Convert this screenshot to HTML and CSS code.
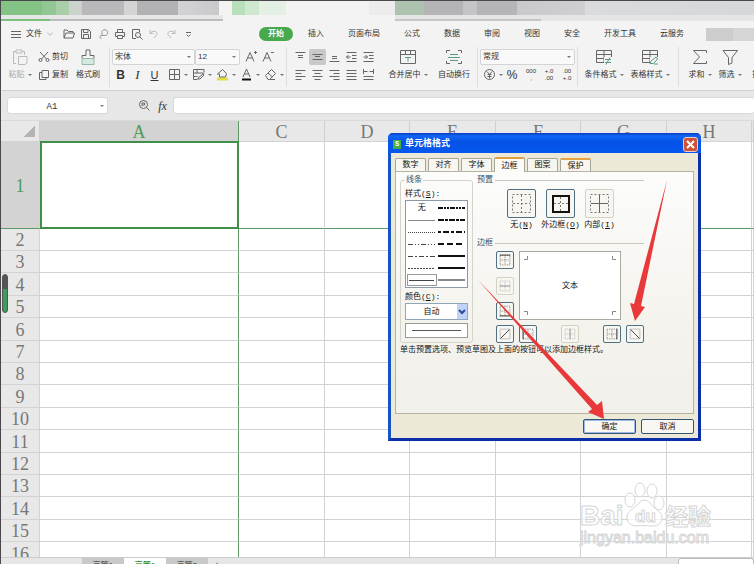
FILE: index.html
```html
<!DOCTYPE html>
<html lang="zh-CN">
  <head>
    <meta charset="UTF-8" />
    <meta name="viewport" content="width=device-width, initial-scale=1.0" />
    <title>单元格格式</title>
    <link rel="stylesheet" href="styles.css">
  </head>

  <body>
    <!-- shared icon shapes -->
    <svg class="defs" aria-hidden="true">
      <symbol id="dots" viewBox="0 0 18 18">
        <path d="M3.5 3.5h11v11h-11zM9 4v10M4 9h10" fill="none" stroke="#777" stroke-dasharray="1 1" />
      </symbol>
      <symbol id="table" viewBox="0 0 18 18">
        <path d="M1.5 2.5h15v12h-15zM1.5 6.500h15M1.500 10.500h15M9 2.500v12" />
      </symbol>
    </svg>

    <div class="titlebar"></div>

    <nav class="menu">
      <button class="file"><svg width="10" height="8"><path d="M0 1.500h10M0 4.500h10M0 7.500h10" /></svg>文件<svg width="6" height="6"><path class="light" d="M.5 1.500l2.500 3 2.500-3" /></svg></button>
      <button class="ico" aria-label="打开"><svg width="12" height="12"><path d="M1 10V2h3l1.500 1.500H10V5M1 10l2-5h8.500L10 10z" /></svg></button>
      <button class="ico" aria-label="保存"><svg width="12" height="12"><path d="M1.500 1.500h7l2 2v7h-9zM3.500 1.500v3h4.500v-3M3.500 10.500v-4h5v4" /></svg></button>
      <button class="ico" aria-label="输出"><svg width="12" height="12"><path class="light2" d="M5 7.500V3.500a3 3 0 1 1 2 4H4.500a1.500 1.500 0 1 0 0 3" /></svg></button>
      <button class="ico" aria-label="打印"><svg width="12" height="12"><path d="M3.500 4V1.500h5V4M3 8.500H1.500V4.500h9v4H9M3.500 7.500h5v3h-5z" /></svg></button>
      <button class="ico" aria-label="打印预览"><svg width="12" height="12"><path d="M5 10.500H1.500v-9h7V4M9 9l2.500 2.500" /><circle cx="7" cy="7" r="2.500" /></svg></button>
      <button class="ico" aria-label="撤销"><svg width="12" height="12"><path class="light" d="M2 2v3.500h3.500M2 5.500c3-4 8-2 7 1L6 10" /></svg></button>
      <button class="ico" aria-label="恢复"><svg width="12" height="12"><path class="light" d="M10 2v3.500H6.500M10 5.500c-3-4-8-2-7 1L6 10" /></svg></button>
      <button class="ico" aria-label="更多"><svg width="12" height="12"><path d="M4 4.500h5M4.500 6.500l2 2 2-2" /></svg></button>
      <div class="tabs">
        <a href="#" class="active">开始</a>
        <a href="#">插入</a>
        <a href="#">页面布局</a>
        <a href="#">公式</a>
        <a href="#">数据</a>
        <a href="#">审阅</a>
        <a href="#">视图</a>
        <a href="#">安全</a>
        <a href="#">开发工具</a>
        <a href="#">云服务</a>
      </div>
      <div class="account"></div>
    </nav>

    <div class="ribbon">
      <div class="group clipboard">
        <button class="big off"><svg width="18" height="18"><path d="M5 15.500H2.500v-12H5M11 3.500h2.500V7M5 2h6v3H5zM7.500 8.500h8.500v6.500l-2 1.500H7.500z" /></svg><span>粘贴<i class="arr"></i></span></button>
        <div class="stack">
          <button class="line"><svg width="12" height="12"><path d="M2 1l6.500 7M10 1L3.500 8" /><circle cx="2.500" cy="9" r="1.500" /><circle cx="9.500" cy="9" r="1.500" /></svg>剪切</button>
          <button class="line"><svg width="12" height="12"><path d="M4 1.500h6.500v7H4zM4 3.500H1.500v7H8v-2" /></svg>复制</button>
        </div>
        <button class="big brush"><svg width="18" height="18"><path class="tint" d="M3 10.500h12v6H3z" /><path d="M3 10V7.500h4V2h4v5.500h4V10" /></svg><span>格式刷</span></button>
      </div>

      <div class="group fonts">
        <div class="row">
          <span class="pick fontname"><select aria-label="字体"><option>宋体</option></select></span>
          <span class="pick fontsize"><select aria-label="字号"><option>12</option></select></span>
          <button class="ico" aria-label="增大字号"><svg width="14" height="13"><path d="M2 11.500l4-9 4 9M3.500 8h5M10 2.500h3M11.500 1v3" /></svg></button>
          <button class="ico" aria-label="减小字号"><svg width="14" height="13"><path d="M2 11.500l4-9 4 9M3.500 8h5M10 2.500h3" /></svg></button>
        </div>
        <div class="row">
          <button class="ico bold">B</button>
          <button class="ico italic">I</button>
          <button class="ico under">U</button>
          <button class="drop" aria-label="边框"><svg width="13" height="13"><path d="M1.500 1.500h10v10h-10zM6.500 1.500v10M1.500 6.500h10" /></svg><i class="arr"></i></button>
          <button class="drop" aria-label="单元格样式"><svg width="13" height="13"><path d="M12 4V1.500H1.500v10h4M1.500 5h11M1.500 8.500h4M5 1.500v4M6 10l5-4 1 1-4 4H6z" /></svg><i class="arr"></i></button>
          <button class="drop" aria-label="填充颜色"><svg width="13" height="13"><path class="yellow" d="M1 9.500h11v3H1z" /><path d="M1.500 6L6.500 1.500l4 4L9.500 9H3.500V6z" /></svg><i class="arr"></i></button>
          <button class="drop" aria-label="字体颜色"><svg width="13" height="13"><path d="M3 9l3.500-8L10 9M4.500 6h4" /><path class="black" d="M2 10.500h9v2H2z" /></svg><i class="arr"></i></button>
          <button class="drop" aria-label="清除"><svg width="13" height="13"><path d="M1.500 7.500l6-6 4 4-6 6H4zM4 5l4.500 4M6 11.500h5" /></svg><i class="arr"></i></button>
        </div>
      </div>

      <div class="group align">
        <div class="row">
          <button class="ico" aria-label="顶端对齐"><svg width="11" height="11"><path d="M.5 1.500h10M3 4.500h5M3 6.500h5" /></svg></button>
          <button class="ico on" aria-label="垂直居中"><svg width="11" height="11"><path d="M.5 3.500h10M3 5.500h5M.5 8.500h10" /></svg></button>
          <button class="ico" aria-label="底端对齐"><svg width="11" height="11"><path d="M3 5.500h5M3 7.500h5M.5 10.500h10" /></svg></button>
          <button class="ico" aria-label="减少缩进"><svg width="11" height="11"><path d="M.5 1.500h10M6 4.500h4.500M6 7.500h4.500M.5 10.500h10M4.500 6h-4l2-2M.5 6l2 2" /></svg></button>
          <button class="ico" aria-label="增加缩进"><svg width="11" height="11"><path d="M.5 1.500h10M6 4.500h4.500M6 7.500h4.500M.5 10.500h10M.5 6h4l-2-2M4.500 6l-2 2" /></svg></button>
        </div>
        <div class="row">
          <button class="ico" aria-label="左对齐"><svg width="11" height="11"><path d="M.5 1.500h10M.5 4.500h6M.5 7.500h10M.5 10.500h6" /></svg></button>
          <button class="ico" aria-label="居中"><svg width="11" height="11"><path d="M.5 1.500h10M2.500 4.500h6M.5 7.500h10M2.500 10.500h6" /></svg></button>
          <button class="ico" aria-label="右对齐"><svg width="11" height="11"><path d="M.5 1.500h10M4.500 4.500h6M.5 7.500h10M4.500 10.500h6" /></svg></button>
          <button class="ico" aria-label="两端对齐"><svg width="11" height="11"><path d="M.5 1.500h10M.5 4.500h10M.5 7.500h10M.5 10.500h10" /></svg></button>
          <button class="ico" aria-label="分散对齐"><svg width="11" height="11"><path d="M.5 0v5M10.500 0v5M1 2.500h3.500M6.500 2.500H10M.5 7.500h10M.5 10.500h10" /></svg></button>
        </div>
      </div>

      <div class="group merge">
        <button class="big"><svg width="18" height="18"><path d="M1.500 2.500h15v13h-15zM1.500 6.500h15M6.500 2.500v4M11.500 2.500v4" /><path class="green" d="M6 9.500h6M9 9.500v4" /></svg><span>合并居中<i class="arr"></i></span></button>
        <button class="big"><svg width="18" height="18"><path d="M1.500 5V2.500H5M13 2.500h3.500V5M1.500 13v2.500H5M13 15.500h3.500V13" /><path class="green" d="M5 6.500h8M3 9.500h12M5 12.500h8" /></svg><span>自动换行</span></button>
      </div>

      <div class="group number">
        <div class="row">
          <span class="pick numfmt"><select aria-label="数字格式"><option>常规</option></select></span>
        </div>
        <div class="row">
          <button class="drop" aria-label="货币"><svg width="13" height="13"><circle cx="6.500" cy="6.500" r="5" /><path d="M4 3.500l2.500 3 2.500-3M6.500 6.500v4M4.500 6.500h4M4.500 8.500h4" /></svg><i class="arr"></i></button>
          <button class="ico percent">%</button>
          <button class="ico tiny">000<br>,</button>
          <button class="ico tiny">+.0<br>.00</button>
          <button class="ico tiny">.00<br>+.0</button>
        </div>
      </div>

      <div class="group styles">
        <button class="big"><svg width="18" height="18"><use href="#table" /><path class="patch" d="M9 9h9v9H9z" /><path class="green" d="M10 11.500h6M10 14.500h6M15 9.500l-4 7" /></svg><span>条件格式<i class="arr"></i></span></button>
        <button class="big"><svg width="18" height="18"><use href="#table" /><path class="patch" d="M9 9h9v9H9z" /><path class="green" d="M9 16l1-3 5-4 1.500 2-4 4.500H9M13 16h4" /></svg><span>表格样式<i class="arr"></i></span></button>
      </div>

      <div class="group edit">
        <button class="big"><svg width="18" height="18"><path d="M15.500 5V2.500h-13l6 6.500-6 6.500h13V13" /></svg><span>求和<i class="arr"></i></span></button>
        <button class="big"><svg width="18" height="18"><path d="M2 2.500h14.500L11 9.500V15l-3.500 1.500v-7z" /></svg><span>筛选<i class="arr"></i></span></button>
        <button class="big"><svg width="18" height="18"><path d="M4.500 2.500h9v13h-9z" /></svg><span>排序</span></button>
      </div>
    </div>

    <div class="formula">
      <span class="pick namebox"><input type="text" value="A1" aria-label="名称框"></span>
      <button class="ico" aria-label="查找"><svg width="13" height="13"><circle cx="5.500" cy="5.500" r="4" /><path d="M4 7V4h2.500v2H4.500M8.500 8.500l3 3" /></svg></button>
      <button class="ico fx">fx</button>
      <input type="text" class="fxinput" aria-label="编辑栏">
    </div>

    <main class="sheet">
      <table>
        <colgroup>
          <col class="c-head"><col class="c-a"><col class="c-odd"><col class="c-even"><col class="c-odd"><col class="c-even"><col class="c-odd"><col class="c-even"><col>
        </colgroup>
        <thead>
          <tr><th class="corner"></th><th class="sel">A</th><th>C</th><th>D</th><th>E</th><th>F</th><th>G</th><th>H</th><th></th></tr>
        </thead>
        <tbody>
          <tr class="first"><th>1</th><td class="cell"></td><td></td><td></td><td></td><td></td><td></td><td></td><td></td></tr>
          <tr><th>2</th><td></td><td></td><td></td><td></td><td></td><td></td><td></td><td></td></tr>
          <tr><th>3</th><td></td><td></td><td></td><td></td><td></td><td></td><td></td><td></td></tr>
          <tr><th>4</th><td></td><td></td><td></td><td></td><td></td><td></td><td></td><td></td></tr>
          <tr><th>5</th><td></td><td></td><td></td><td></td><td></td><td></td><td></td><td></td></tr>
          <tr><th>6</th><td></td><td></td><td></td><td></td><td></td><td></td><td></td><td></td></tr>
          <tr><th>7</th><td></td><td></td><td></td><td></td><td></td><td></td><td></td><td></td></tr>
          <tr><th>8</th><td></td><td></td><td></td><td></td><td></td><td></td><td></td><td></td></tr>
          <tr><th>9</th><td></td><td></td><td></td><td></td><td></td><td></td><td></td><td></td></tr>
          <tr><th>10</th><td></td><td></td><td></td><td></td><td></td><td></td><td></td><td></td></tr>
          <tr><th>11</th><td></td><td></td><td></td><td></td><td></td><td></td><td></td><td></td></tr>
          <tr><th>12</th><td></td><td></td><td></td><td></td><td></td><td></td><td></td><td></td></tr>
          <tr><th>13</th><td></td><td></td><td></td><td></td><td></td><td></td><td></td><td></td></tr>
          <tr><th>14</th><td></td><td></td><td></td><td></td><td></td><td></td><td></td><td></td></tr>
          <tr><th>15</th><td></td><td></td><td></td><td></td><td></td><td></td><td></td><td></td></tr>
          <tr><th>16</th><td></td><td></td><td></td><td></td><td></td><td></td><td></td><td></td></tr>
        </tbody>
      </table>
    </main>

    <footer class="sheets">
      <button>高管1</button>
      <button class="current">高管2</button>
      <button>高管3</button>
      <button class="add">+</button>
      <div class="scroll"></div>
    </footer>

    <div class="handle"></div>

    <!-- watermark -->
    <svg class="mark" width="150" height="70">
      <g class="outline">
        <text x="4" y="44" class="latin">Bai</text>
        <ellipse cx="54" cy="19" rx="5" ry="7" />
        <ellipse cx="64" cy="9" rx="5" ry="7" />
        <ellipse cx="76" cy="10" rx="5" ry="7" />
        <ellipse cx="83" cy="22" rx="5" ry="7" />
        <path d="M51 36c0-6 7-8 12-14 3-4 8-4 11 0 4 6 12 8 12 15 0 5-4 8-9 8-5 0-11-1-16 0-6 0-10-3-10-9z" />
        <text x="59" y="41" class="du">du</text>
        <text x="89" y="44" class="cjk">经验</text>
        <text x="4" y="62" class="url">jingyan.baidu.com</text>
      </g>
    </svg>

    <div class="dialog" role="dialog" aria-labelledby="dlg-title">
      <div class="dlg-title">
        <span class="logo">S</span>
        <span id="dlg-title">单元格格式</span>
        <button class="close" aria-label="关闭"><svg width="9" height="9"><path d="M1 1l7 7M8 1L1 8" /></svg></button>
      </div>

      <div class="dlg-body">
        <div class="dlg-tabs">
          <button>数字</button>
          <button>对齐</button>
          <button>字体</button>
          <button class="current">边框</button>
          <button>图案</button>
          <button class="hot">保护</button>
        </div>

        <div class="panel">
          <div class="cols">
            <fieldset>
              <legend>线条</legend>
              <div class="lbl">样式(<u>S</u>):</div>
              <div class="styles-list">
                <span>无</span>
                <svg><path class="w2" d="M1 6h27" stroke-dasharray="5 1 2 1 2 1" /></svg>
                <svg><path d="M1 6.500h27" class="gray" /></svg>
                <svg><path class="w2" d="M1 6h27" stroke-dasharray="6 1 3 1" /></svg>
                <svg><path d="M1 6.500h27" stroke-dasharray="1 1" /></svg>
                <svg><path class="w2" d="M1 6h27" stroke-dasharray="3 2 6 2" /></svg>
                <svg><path d="M1 6.500h27" stroke-dasharray="5 2 1 2 1 2" /></svg>
                <svg><path class="w2" d="M1 6h27" stroke-dasharray="6 3" /></svg>
                <svg><path d="M1 6.500h27" stroke-dasharray="5 2 2 2" /></svg>
                <svg><path class="w2" d="M1 6h27" /></svg>
                <svg><path d="M1 6.500h27" stroke-dasharray="2 1" /></svg>
                <svg><path class="w2" d="M1 6h27" /></svg>
                <svg class="picked"><path d="M1 5.500h25" /></svg>
                <svg><path class="w2 gray" d="M1 6h27" /></svg>
              </div>
              <label class="lbl" for="color">颜色(<u>C</u>):</label>
              <span class="combo"><select id="color"><option>自动</option></select><svg width="9" height="15"><path d="M2 6l3 3 3-3" /></svg></span>
              <div class="sample"></div>
            </fieldset>

            <div class="right">
              <h3>预置</h3>
              <div class="presets">
                <div><button id="p-none"><svg width="25" height="25"><path class="grid" d="M3.500 3.500h18v18h-18zM12.500 4v17M4 12.500h17" /></svg></button><label for="p-none">无(<u>N</u>)</label></div>
                <div><button id="p-out"><svg width="25" height="25"><path class="grid" d="M12.500 6v14M6 12.500h14" /><path class="thick" d="M5 5h16v16H5z" /></svg></button><label for="p-out">外边框(<u>O</u>)</label></div>
                <div><button id="p-in" class="dim"><svg width="25" height="25"><path class="grid" d="M3.500 3.500h18v18h-18z" /><path d="M12.500 4v17M4 12.500h17" /></svg></button><label for="p-in">内部(<u>I</u>)</label></div>
              </div>
              <h3>边框</h3>
              <div class="edges">
                <div class="side">
                  <button aria-label="上边框"><svg viewBox="0 0 18 18"><use href="#dots" /><path d="M3 3.500h12" /></svg></button>
                  <button aria-label="内横线" class="dim"><svg viewBox="0 0 18 18"><use href="#dots" /><path d="M3 9h12" /></svg></button>
                  <button aria-label="下边框"><svg viewBox="0 0 18 18"><use href="#dots" /><path d="M3 14.500h12" /></svg></button>
                </div>
                <div class="preview">
                  <svg width="5" height="5"><path d="M0 3.500h3.500V0" /></svg>
                  <svg width="5" height="5"><path d="M5 3.500H1.500V0" /></svg>
                  <span>文本</span>
                  <svg width="5" height="5"><path d="M0 1.500h3.500V5" /></svg>
                  <svg width="5" height="5"><path d="M5 1.500H1.500V5" /></svg>
                </div>
                <button aria-label="斜线" class="diag"><svg viewBox="0 0 18 18"><path class="frame" d="M3.500 3.500h11v11h-11z" /><path d="M4 14L14 4" /></svg></button>
                <div class="bottom">
                  <button aria-label="左边框"><svg viewBox="0 0 18 18"><use href="#dots" /><path d="M3.500 3v12" /></svg></button>
                  <button aria-label="内竖线" class="dim"><svg viewBox="0 0 18 18"><use href="#dots" /><path d="M9 3v12" /></svg></button>
                  <button aria-label="右边框"><svg viewBox="0 0 18 18"><use href="#dots" /><path d="M14.500 3v12" /></svg></button>
                </div>
                <button aria-label="反斜线" class="diag"><svg viewBox="0 0 18 18"><path class="frame" d="M3.500 3.500h11v11h-11z" /><path d="M4 4l10 10" /></svg></button>
              </div>
            </div>
          </div>
          <p>单击预置选项、预览草图及上面的按钮可以添加边框样式。</p>
        </div>

        <div class="actions">
          <button class="ok">确定</button>
          <button>取消</button>
        </div>
      </div>

      <svg class="pointers" viewBox="0 0 313 307">
        <path d="M90 146L209 271 214 267 216 285 200 278 204 275z" />
        <path d="M279 46L253 172 257 173 247 187 242 169 246 170z" />
      </svg>
    </div>
  </body>
</html>
```
FILE: styles.css
```css
* {
  box-sizing: border-box;
}
body {
  margin: 0;
  height: 100vh;
  display: flex;
  flex-direction: column;
  overflow: hidden;
  position: relative;
  border-left: 1px solid #4a484c;
  background: #f3f3f3;
  color: #333;
  font: 8px/12px "Liberation Sans", "Noto Sans CJK SC", sans-serif;
}
button,
input,
select {
  margin: 0;
  padding: 0;
  border: 0;
  background: none;
  color: inherit;
  font: inherit;
  white-space: nowrap;
}
svg {
  fill: none;
  stroke: #666;
  flex: none;
}
.defs {
  position: absolute;
  width: 0;
  height: 0;
}

/* title strip and menu */
.titlebar {
  flex: none;
  height: 21px;
  border-top: 1px solid #4a484c;
  background:
    linear-gradient(90deg, #7cc07f 49px, #bdbdbd 49px, #bdbdbd 222px, transparent 222px, transparent 394px, #c6c6c6 394px, #c6c6c6 540px, transparent 540px) 0 18px / 100% 2px no-repeat,
    linear-gradient(90deg, #83c386 41px, #92c795 41px, #92c795 55px, #a8ceaa 55px, #a8ceaa 68px, #ccd2cc 68px, #ccd2cc 81px, #b9b9bb 81px, #b9b9bb 123px, #d4d4d5 123px, #d4d4d5 136px, #b2b2b4 136px, #b2b2b4 177px, #d3d3d5 177px, #c9c9cb 218px, #f3f3f3 218px, #f3f3f3 231px, #b9dfba 231px, #b9dfba 244px, #cee7ce 244px, #cee7ce 258px, #e4f0e4 258px, #e4f0e4 285px, #f3f3f3 285px, #f3f3f3 368px, #ececed 368px, #ececed 394px, #adc3af 394px, #adc3af 423px, #b4b4b6 423px, #b4b4b6 462px, #c5c5c7 462px, #c5c5c7 476px, #b5b5b7 476px, #b5b5b7 516px, #c9c9cb 516px, #cfcfd1 584px, #dadbdd 584px, #d6d7d9) 0 0 / 100% 14px no-repeat,
    linear-gradient(90deg, #e6e6e6 222px, #f3f3f3 222px, #f3f3f3 394px, #e5e5e5 394px);
}
.menu {
  flex: none;
  display: flex;
  align-items: center;
  height: 26px;
  padding-left: 10px;
}
.menu .light {
  stroke: #bbb;
}
.menu .light2 {
  stroke: #999;
}
.file {
  display: flex;
  align-items: center;
  gap: 5px;
  width: 49px;
}
.ico {
  flex: none;
  display: flex;
  align-items: center;
  justify-content: center;
  width: 17px;
  height: 16px;
}
.tabs {
  display: flex;
  align-items: center;
  gap: 24px;
  margin-left: 72px;
}
.tabs a {
  color: #333;
  text-decoration: none;
  white-space: nowrap;
}
.tabs .active {
  margin: 0 -9px;
  padding: 1px 9px;
  border-radius: 7px;
  background: #48a84c;
  color: #fff;
  font-weight: bold;
}
.account {
  flex: 1;
  height: 13px;
  margin-left: 22px;
  background: linear-gradient(90deg, #cdcdcd 27px, #d6d6d6 27px);
}

/* ribbon */
.ribbon {
  flex: none;
  display: flex;
  height: 44px;
  border-bottom: 1px solid #d0d0d0;
  overflow: hidden;
}
.group {
  flex: none;
  padding-top: 1px;
  margin: 0 2px 3px 0;
  border-right: 1px solid #ddd;
}
.row {
  display: flex;
  align-items: center;
  height: 17px;
  margin-bottom: 1px;
}
.clipboard,
.merge,
.styles,
.edit {
  display: flex;
}
.clipboard {
  width: 109px;
  padding-left: 4px;
}
.fonts {
  width: 175px;
}
.align {
  width: 88px;
  padding-left: 3px;
  border: 0;
}
.merge {
  width: 99px;
  padding-left: 8px;
  gap: 4px;
}
.number {
  width: 98px;
}
.styles {
  width: 99px;
  padding-left: 3px;
  gap: 4px;
}
.edit {
  border: 0;
  padding-left: 4px;
}
.big {
  flex: none;
  display: flex;
  flex-direction: column;
  align-items: center;
  justify-content: space-between;
  height: 33px;
  width: 30px;
}
.merge .big,
.styles .big {
  width: 42px;
}
.big.off {
  color: #aaa;
}
.big.off svg {
  stroke: #bbb;
}
.stack {
  width: 38px;
  padding-left: 3px;
}
.line {
  display: flex;
  align-items: center;
  gap: 2px;
  height: 17px;
  margin-bottom: 1px;
}
.arr {
  display: inline-block;
  margin-left: 3px;
  border: 2px solid transparent;
  border-top-color: #777;
  border-bottom: 0;
  vertical-align: middle;
}
.drop {
  flex: none;
  display: flex;
  align-items: center;
  width: 24px;
  padding-left: 5px;
}
.number .drop {
  width: 22px;
  padding-left: 3px;
}
.tint {
  fill: #d5e8dd;
  stroke: #9ab8a8;
}
.green {
  stroke: #5c9a84;
}
.yellow {
  fill: #e2dc3c;
  stroke: none;
}
.black {
  fill: #111;
  stroke: none;
}
.patch {
  fill: #f3f3f3;
  stroke: none;
}
.on {
  background: #c9c9c9;
  border-radius: 2px;
}
.bold {
  font-size: 12px;
  font-weight: bold;
}
.italic {
  font: italic 13px/16px "Liberation Serif", serif;
}
.under {
  font-size: 11px;
  text-decoration: underline;
}
.percent {
  width: 20px;
  font-size: 12px;
}
.tiny {
  display: block;
  font-size: 6px;
  line-height: 7px;
  width: 18px;
}
.pick {
  position: relative;
  flex: none;
  display: flex;
  height: 16px;
  border: 1px solid #d4d4d4;
  border-radius: 2px;
  background: #f9f9f9;
}
.pick::after {
  content: "";
  align-self: center;
  margin-right: 3px;
  border: 2px solid transparent;
  border-top-color: #777;
  border-bottom: 0;
}
.pick select,
.pick input {
  appearance: none;
  flex: 1;
  min-width: 0;
  padding-left: 2px;
  outline: 0;
}
.fontname {
  width: 83px;
}
.fontsize {
  width: 45px;
  margin-right: 2px;
}
.numfmt {
  width: 95px;
}

/* name box and formula input */
.formula {
  flex: none;
  display: flex;
  align-items: center;
  height: 30px;
  padding-left: 6px;
  background: #e7e7e7;
  border-bottom: 1px solid #dadada;
}
.formula .pick,
.fxinput {
  height: 17px;
  border: 1px solid #d9d9d9;
  border-radius: 3px;
  background: #fff;
}
.formula .namebox {
  width: 101px;
  margin-right: 28px;
}
.namebox input {
  padding: 2px 4px 0 0;
  text-align: center;
  font: 9px/12px "Liberation Mono", monospace;
}
.fx {
  width: 19px;
  margin-right: 1px;
  font: italic 12px/16px "Liberation Serif", serif;
}
.fxinput {
  flex: 1;
  border-right: 0;
}

/* cells */
.sheet {
  flex: 1;
  min-height: 0;
  overflow: hidden;
  background: #fff;
}
table {
  width: 100%;
  table-layout: fixed;
  border-collapse: separate;
  border-spacing: 0;
}
.c-head {
  width: 39px;
}
.c-a {
  width: 199px;
}
.c-odd {
  width: 86px;
}
.c-even {
  width: 85px;
}
th,
td {
  height: 22px;
  padding: 0;
  border-right: 1px solid #d3d3d3;
  border-bottom: 1px solid #d3d3d3;
}
/* rows run 22px, every few 23px */
tr:nth-child(5n + 4) td,
tr:nth-child(5n + 1) td {
  height: 23px;
}
th {
  padding-top: 1px;
  background: #e8e8e8;
  color: #777;
  font: 18px/18px "Liberation Serif", serif;
}
thead th {
  height: 21px;
  padding-top: 2px;
  border-right-color: #cfcfcf;
}
thead .sel {
  background: #d3d3d3;
  color: #4e9a57;
  border-bottom-color: #3f8f48;
}
.corner {
  background: linear-gradient(135deg, transparent 50%, #b4b4b4 50%) 23px 5px / 11px 11px no-repeat #e8e8e8;
}
td:nth-child(2),
.sel {
  border-right-color: #5c9a64;
}
tbody .first th {
  background: #d3d3d3;
  color: #4e9a57;
}
tbody .first th,
tbody .first td {
  height: 87px;
  border-bottom-color: #5c9a64;
}
tbody .first .cell {
  border: 2px solid #3f8f48;
  border-top-width: 1px;
}

/* sheet tabs */
.sheets {
  flex: none;
  display: flex;
  height: 7px;
  padding-left: 81px;
  overflow: hidden;
  border-top: 1px solid #ccc;
  background: #e6e6e6;
}
.sheets button {
  width: 42px;
  height: 14px;
  padding-top: 1px;
  background: #c9c9c9;
}
.sheets .current {
  background: #fff;
  color: #2f8f3a;
  font-weight: bold;
}
.sheets .add {
  width: 18px;
  background: none;
  font-size: 12px;
}
.scroll {
  width: 76px;
  height: 12px;
  margin-left: auto;
  border: 1px solid #bbb;
  border-radius: 3px;
  background: #fff;
}
.handle {
  position: absolute;
  left: 1px;
  top: 274px;
  width: 6px;
  height: 39px;
  border: 1px solid #555;
  border-radius: 3px;
  background: linear-gradient(#555 14px, #3f9a5c 14px);
}

.mark {
  position: absolute;
  left: 575px;
  top: 481px;
}
.outline {
  fill: #fff;
  fill-opacity: 0.7;
  stroke: #d6d6d6;
}
.latin {
  font: bold 28px "Liberation Sans", sans-serif;
}
.du {
  font: bold 17px "Liberation Sans", sans-serif;
}
.cjk {
  font: bold 23px "Noto Sans CJK SC", sans-serif;
}
.url {
  font: 16px "Liberation Sans", sans-serif;
}

/* dialog */
.dialog {
  position: absolute;
  left: 387px;
  top: 133px;
  width: 313px;
  border: 3px solid #0a2fa8;
  border-top: 0;
  border-left-color: #1554c4;
  border-radius: 5px 5px 0 0;
  background: #0a4fe0;
  color: #111;
  font-family: "Liberation Mono", "Noto Sans CJK SC", monospace;
}
.dlg-title {
  display: flex;
  align-items: center;
  gap: 4px;
  height: 20px;
  margin: 0 -3px;
  padding: 2px 3px 0 5px;
  border-radius: 5px 5px 0 0;
  background: linear-gradient(#0a3cc0, #0f66f5 3px, #0652e6 9px, #0558f0);
  color: #fff;
  font-size: 9px;
  font-weight: bold;
}
.logo {
  width: 8px;
  height: 9px;
  background: #3fae49;
  font-size: 7px;
  line-height: 9px;
  text-align: center;
}
.close {
  display: flex;
  align-items: center;
  justify-content: center;
  width: 15px;
  height: 15px;
  margin-left: auto;
  border: 1px solid #eecdc8;
  border-radius: 3px;
  background: #cf5238;
}
.close svg {
  stroke: #fff;
  stroke-width: 2;
}
.dlg-body {
  padding: 4px;
  background: #ece9d9;
}
.dlg-tabs {
  display: flex;
  gap: 2px;
  align-items: flex-end;
}
.dlg-tabs button {
  width: 31px;
  height: 13px;
  border: 1px solid #a5a698;
  border-bottom: 0;
  border-radius: 2px 2px 0 0;
  background: #f7f6f0;
}
.dlg-tabs .current {
  height: 15px;
  margin-bottom: -1px;
  border-top: 2px solid #e0a040;
  background: #fcfbf8;
}
.dlg-tabs .hot {
  border-top: 2px solid #e8a33c;
}
.panel {
  height: 243px;
  padding: 3px 4px;
  border: 1px solid #b4b3a4;
  background: linear-gradient(#fcfcfb, #f4f2ec 70%, #f2f0ea);
}
.cols {
  display: flex;
  gap: 4px;
}
fieldset {
  width: 73px;
  margin: 0;
  padding: 3px 4px;
  border: 1px solid #d5d4ca;
  border-radius: 3px;
}
legend,
h3 {
  margin: 0;
  color: #2e5570;
  font-size: 8px;
  font-weight: normal;
  line-height: 10px;
}
legend {
  padding: 0 1px;
}
.lbl {
  display: block;
  line-height: 12px;
}
.styles-list {
  display: grid;
  grid-template-columns: 1fr 1fr;
  grid-auto-rows: 12px;
  margin-bottom: 3px;
  padding: 1px;
  border: 1px solid #8d9aa5;
  background: #fff;
}
.styles-list span {
  text-align: center;
}
.styles-list svg {
  width: 100%;
  height: 12px;
  stroke: #444;
}
.styles-list .picked {
  border: 1px solid #999;
}
.styles-list .w2 {
  stroke: #111;
  stroke-width: 2;
}
.styles-list .gray {
  stroke: #888;
}
.combo {
  display: flex;
  height: 17px;
  border: 1px solid #8fa5b8;
  background: #fff;
}
.combo select {
  appearance: none;
  flex: 1;
  min-width: 0;
  text-align: center;
}
.combo svg {
  width: 10px;
  background: #c2d3fb;
  stroke: #2a4a94;
  stroke-width: 2;
}
.sample {
  height: 15px;
  margin-top: 3px;
  padding: 6px 4px;
  border: 1px solid #999;
  background: #555 content-box;
  box-shadow: inset 0 0 0 6px #fff;
}
.right {
  flex: 1;
}
h3 {
  display: flex;
  align-items: center;
  gap: 2px;
}
h3::after {
  content: "";
  width: 149px;
  height: 1px;
  background: #c9c8be;
}
.presets {
  display: flex;
  margin: 4px 0 7px;
  padding-left: 25px;
}
.presets div {
  display: flex;
  flex-direction: column;
  align-items: center;
  width: 39px;
}
.presets label {
  line-height: 13px;
  white-space: nowrap;
}
.presets button,
.edges button {
  display: flex;
  align-items: center;
  justify-content: center;
  border: 1px solid #4f6f82;
  border-radius: 2px;
  background: #f7f6f1;
}
.presets button {
  width: 29px;
  height: 29px;
}
.edges button {
  width: 18px;
  height: 18px;
}
.presets .dim,
.edges .dim {
  border-color: #d3d1c2;
}
.grid {
  stroke: #777;
  stroke-dasharray: 2 2;
}
.thick {
  stroke: #111;
  stroke-width: 2;
}
.edges .dim svg {
  opacity: 0.5;
}
.edges button svg {
  width: 16px;
  height: 16px;
  stroke: #333;
}
.edges .frame {
  stroke: #bbb;
}
.edges {
  display: grid;
  grid-template-columns: 18px 102px 18px;
  gap: 5px;
  margin-top: 3px;
  padding-left: 19px;
}
.side {
  display: flex;
  flex-direction: column;
  justify-content: space-between;
}
.bottom {
  display: flex;
  justify-content: space-between;
}
.preview {
  display: grid;
  grid-template-columns: 1fr 1fr;
  grid-template-rows: 1fr auto 1fr;
  height: 69px;
  padding: 4px;
  border: 1px solid #a9a9a0;
  background: #fff;
}
.preview span {
  grid-column: 1 / 3;
  text-align: center;
}
.preview svg {
  stroke: #888;
  align-self: end;
}
.preview svg:nth-of-type(2n) {
  justify-self: end;
}
.preview svg:nth-of-type(-n + 2) {
  align-self: start;
}
.edges > .diag:nth-child(3) {
  grid-area: 2 / 1;
}
.edges > .bottom {
  grid-area: 2 / 2;
}
.edges > .diag:nth-child(5) {
  grid-area: 2 / 3;
}
.panel p {
  margin: 1px 0;
}
.actions {
  display: flex;
  justify-content: flex-end;
  gap: 5px;
  margin-top: 5px;
}
.actions button {
  width: 53px;
  height: 15px;
  border: 1px solid #35566f;
  border-radius: 2px;
  background: #f8f7f2;
}
.actions .ok {
  box-shadow: inset 0 0 0 1px #9cb8ea;
}
.pointers {
  position: absolute;
  left: -3px;
  top: 1px;
  width: 313px;
  height: 307px;
  pointer-events: none;
  fill: #e8383a;
  stroke: none;
}
```
